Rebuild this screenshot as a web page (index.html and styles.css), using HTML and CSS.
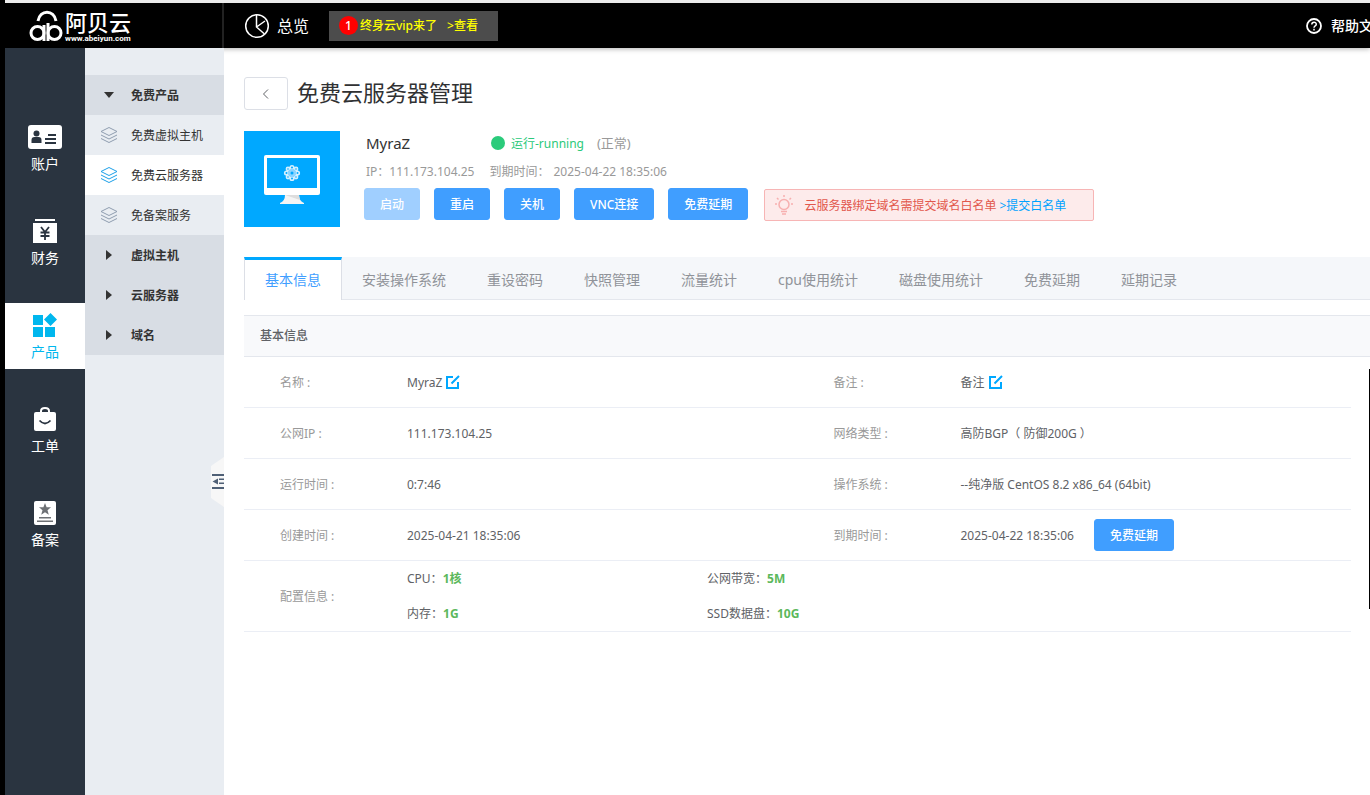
FILE: index.html
```html
<!DOCTYPE html>
<html lang="zh-CN">
<head>
<meta charset="utf-8">
<title>免费云服务器管理</title>
<link rel="stylesheet" href="styles.css">
</head>
<body>
<svg class="defs" aria-hidden="true">
  <symbol id="layers" viewBox="0 0 18 18"><path d="M9 1.500 17 5.500 9 9.500 1 5.500ZM1 9l8 4 8-4M1 12.500l8 4 8-4" fill="none" stroke="currentColor" stroke-width="1"/></symbol>
  <symbol id="edit" viewBox="0 0 14 14"><path d="M7 2H1v11h11V7M5.500 8.500 13 1" fill="none" stroke="currentColor" stroke-width="2"/></symbol>
</svg>
<header class="header">
  <a class="logo" href="#">
    <svg width="34" height="34" viewBox="0 0 34 34" fill="none" stroke="#fff" stroke-width="3">
      <circle cx="8.500" cy="24" r="6.500"/><circle cx="25.500" cy="24" r="6.500"/>
      <path d="M15 16v16M19 14v18M9 12C11 .3 25 .3 27 12"/>
    </svg>
    <span class="logo-text"><span class="logo-name">阿贝云</span><span class="logo-url">www.abeiyun.com</span></span>
  </a>
  <div class="topbar">
    <a class="overview" href="#">
      <svg width="26" height="26" viewBox="0 0 26 26" fill="none" stroke="#fff" stroke-width="1.500"><circle cx="13" cy="13" r="11.300"/><path d="M12.500 1.700V14l8 7M12.500 14l8.500-6"/></svg>
      总览
    </a>
    <a class="vip" href="#"><span class="badge">1</span><span>终身云vip来了</span><span class="vip-look">&gt;查看</span></a>
    <a class="help" href="#">
      <svg width="16" height="16" viewBox="0 0 16 16" fill="none" stroke="#fff" stroke-width="1.800"><circle cx="8" cy="8" r="7"/><path d="M5.800 6.500C5.800 3.500 10.300 3.600 10.300 6.300 10.300 8 8 7.800 8 9.700M8 10.800v1.600" stroke-width="1.500"/></svg>
      帮助文档
    </a>
  </div>
</header>
<div class="layout">
  <nav class="nav">
    <a href="#"><svg width="34" height="24" viewBox="0 0 34 24"><rect width="34" height="24" rx="3" fill="#fff"/><g fill="#2a3440"><circle cx="8.500" cy="8.500" r="3"/><path d="M3.500 18v-3q0-3 3-3h4q3 0 3 3v3zM20 9h8v2h-8zM17 13h11v2H17zM17 17h11v2H17z"/></g></svg>账户</a>
    <a href="#"><svg width="24" height="24" viewBox="0 0 24 24"><path d="M2 0h20v2H2zM0 4h24v20H0z" fill="#fff"/><path d="m8 8 4 5 4-5M12 13v8M7.500 13.500h9M7.500 17h9" fill="none" stroke="#2a3440" stroke-width="1.800"/></svg>财务</a>
    <a class="active" href="#"><svg width="24" height="24" viewBox="0 0 24 24" fill="#00b7ee"><path d="M0 2h10v10H0zM0 14h10v10H0zM12 14h10v10H12zM17.500 0 24 6.500 17.500 13 11 6.500z"/></svg>产品</a>
    <a href="#"><svg width="22" height="24" viewBox="0 0 22 24"><path d="M7 6V4q0-3 4-3t4 3v2" fill="none" stroke="#fff" stroke-width="2"/><rect y="5" width="22" height="19" rx="2" fill="#fff"/><path d="M5.500 13.500q5.500 6 11 0" fill="none" stroke="#2a3440" stroke-width="1.800"/></svg>工单</a>
    <a href="#"><svg width="22" height="24" viewBox="0 0 22 24"><rect width="22" height="24" rx="2" fill="#fff"/><path d="m11 2 1.600 4.300H17l-3.500 2.900 1.300 4.500L11 11.200l-3.800 2.500 1.300-4.500L5 6.300h4.400zM5 16h12v1.500H5zM3 19.500h16V21H3z" fill="#6e7175"/></svg>备案</a>
  </nav>
  <nav class="submenu">
    <a class="group open" href="#"><i class="caret"></i>免费产品</a>
    <a href="#"><svg width="18" height="18"><use href="#layers"/></svg>免费虚拟主机</a>
    <a class="current" href="#"><svg width="18" height="18"><use href="#layers"/></svg>免费云服务器</a>
    <a href="#"><svg width="18" height="18"><use href="#layers"/></svg>免备案服务</a>
    <a class="group" href="#"><i class="caret"></i>虚拟主机</a>
    <a class="group" href="#"><i class="caret"></i>云服务器</a>
    <a class="group" href="#"><i class="caret"></i>域名</a>
    <button class="collapse" aria-label="收起菜单"><svg width="13" height="50" viewBox="0 0 13 50"><path d="M13 0 0 9v32l13 9z" fill="#f7f7f7"/><path d="M1 17h12v2H1zM1 30h12v2H1zM8 21.500h5v1.500H8zM8 25.500h5V27H8zM7 21.500v6l-5.500-3z" fill="#4f6076"/></svg></button>
  </nav>
  <main class="main">
    <div class="title-row">
      <button class="back" aria-label="返回"><svg width="8" height="12" viewBox="0 0 8 12"><path d="M6 1.500 1.500 6 6 10.500" fill="none" stroke="#606266"/></svg></button>
      <h1>免费云服务器管理</h1>
    </div>
    <section class="server">
      <svg class="server-pic" width="96" height="96" viewBox="0 0 96 96">
        <path d="M0 0h96v96H0z" fill="#00a8ff"/><rect x="20" y="24" width="56" height="40" rx="2" fill="#fff"/><path d="M23 27h50v30H23z" fill="#00a8ff"/>
        <path d="M41 64h14q0 6 5 8v1H36v-1q5-2 5-8z" fill="#f4f4f4"/><path d="M41 64h14l1 5z" fill="#ddd"/>
        <g fill="none" stroke="#d5f0ff" stroke-width="1.600"><circle cx="48" cy="36.500" r="1.800"/><circle cx="48" cy="47.500" r="1.800"/><circle cx="42.500" cy="42" r="1.800"/><circle cx="53.500" cy="42" r="1.800"/><circle cx="44" cy="38" r="1.600"/><circle cx="52" cy="38" r="1.600"/><circle cx="44" cy="46" r="1.600"/><circle cx="52" cy="46" r="1.600"/></g><circle cx="48" cy="42" r="4" fill="#8ad4ff"/><circle cx="48" cy="42" r="1.500" fill="#00a8ff"/>
      </svg>
      <div class="server-info">
        <div class="line name-line"><strong class="name">MyraZ</strong><span class="status"><i class="dot"></i>运行-running</span><span class="normal">(正常)</span></div>
        <div class="line meta"><span class="ip">IP：111.173.104.25</span><span>到期时间：</span><span>2025-04-22 18:35:06</span></div>
        <div class="actions">
          <button class="btn" disabled>启动</button><button class="btn">重启</button><button class="btn">关机</button><button class="btn">VNC连接</button><button class="btn">免费延期</button>
          <div class="alert"><svg width="20" height="20" viewBox="0 0 20 20" fill="none" stroke="#f7b0b0" stroke-width="1.500"><circle cx="10" cy="9.500" r="5"/><path d="M7 16.500h6M8 19h4M10 0v2M3 3l1.500 1.500M17 3l-1.500 1.500M1 9h2M17 9h2"/></svg><span>云服务器绑定域名需提交域名白名单 <a href="#">&gt;提交白名单</a></span></div>
        </div>
      </div>
    </section>
    <div class="tabs" role="tablist">
      <button class="tab selected" role="tab" aria-selected="true">基本信息</button><button class="tab" role="tab">安装操作系统</button><button class="tab" role="tab">重设密码</button><button class="tab" role="tab">快照管理</button><button class="tab" role="tab">流量统计</button><button class="tab" role="tab">cpu使用统计</button><button class="tab" role="tab">磁盘使用统计</button><button class="tab" role="tab">免费延期</button><button class="tab" role="tab">延期记录</button>
    </div>
    <h2 class="panel-title">基本信息</h2>
    <div class="table-wrap">
    <table class="info">
      <colgroup><col class="c-label"><col><col class="c-label"><col></colgroup>
      <tr><th scope="row">名称 :</th><td><span class="editable">MyraZ<button class="edit" aria-label="修改名称"><svg width="14" height="14"><use href="#edit"/></svg></button></span></td><th scope="row">备注 :</th><td><span class="editable">备注<button class="edit" aria-label="修改备注"><svg width="14" height="14"><use href="#edit"/></svg></button></span></td></tr>
      <tr><th scope="row">公网IP :</th><td>111.173.104.25</td><th scope="row">网络类型 :</th><td>高防BGP（ 防御200G ）</td></tr>
      <tr><th scope="row">运行时间 :</th><td>0:7:46</td><th scope="row">操作系统 :</th><td>--纯净版 CentOS 8.2 x86_64 (64bit)</td></tr>
      <tr><th scope="row">创建时间 :</th><td>2025-04-21 18:35:06</td><th scope="row">到期时间 :</th><td><span class="renew">2025-04-22 18:35:06<button class="btn">免费延期</button></span></td></tr>
      <tr class="config"><th scope="row">配置信息 :</th><td colspan="3"><div class="specs"><span>CPU：<b>1核</b></span><span>公网带宽：<b>5M</b></span><span>内存：<b>1G</b></span><span>SSD数据盘：<b>10G</b></span></div></td></tr>
    </table>
    </div>
  </main>
</div>
<div class="scroll-mark"></div>
</body>
</html>
```
FILE: styles.css
```css
* { box-sizing: border-box; }
body {
  margin: 0;
  min-height: 100vh;
  display: flex;
  flex-direction: column;
  overflow: hidden;
  border-left: 5px solid #000;
  background: #fff;
  color: #606266;
  font: 12px/19px "Noto Sans", "Noto Sans CJK SC", sans-serif;
}
a { color: inherit; text-decoration: none; }
button { font: inherit; color: inherit; cursor: pointer; }
svg { display: block; flex: none; }
.defs { position: absolute; width: 0; height: 0; }

.header {
  display: flex;
  height: 48px;
  border-top: 3px solid #ececec;
  background: #000;
  color: #fff;
  box-shadow: 0 1px 5px rgba(0, 0, 0, .3);
}
.logo {
  width: 219px;
  display: flex;
  align-items: center;
  gap: 2px;
  padding-left: 24px;
  border-right: 2px solid #222;
}
.logo-text { display: flex; flex-direction: column; }
.logo-name { font: 500 22px/26px "Noto Sans CJK SC", sans-serif; }
.logo-url { font: bold 8px/10px Roboto, sans-serif; }
.topbar {
  flex: 1;
  min-width: 0;
  display: flex;
  align-items: center;
  padding-left: 20px;
  overflow: hidden;
}
.overview { display: flex; align-items: center; gap: 7px; font-size: 16px; line-height: 24px; white-space: nowrap; }
.vip {
  display: flex;
  align-items: center;
  height: 30px;
  margin-left: 20px;
  padding: 0 20px 0 10px;
  background: #4c4c4c;
  color: #ff0;
  font-weight: 500;
  white-space: nowrap;
}
.vip-look { margin-left: 10px; }
.badge {
  width: 19px;
  margin-right: 2px;
  border-radius: 50%;
  background: #f00;
  color: #fff;
  text-align: center;
}
.help {
  display: flex;
  align-items: center;
  gap: 9px;
  margin: 0 -17px 0 auto;
  font-size: 14px;
  font-weight: 500;
  white-space: nowrap;
}

.layout { flex: 1; display: flex; }
.nav {
  width: 80px;
  flex: none;
  display: flex;
  flex-direction: column;
  gap: 28px;
  padding-top: 67px;
  background: #2a3440;
  color: #fff;
  font-size: 14px;
}
.nav a {
  height: 66px;
  display: flex;
  flex-direction: column;
  align-items: center;
  gap: 5px;
  padding-top: 10px;
}
.nav .active { background: #fff; color: #00b7ee; }
.submenu {
  position: relative;
  width: 139px;
  flex: none;
  padding-top: 27px;
  background: #e9edf2;
  color: #333;
}
.submenu a {
  height: 40px;
  display: flex;
  align-items: center;
  gap: 13px;
  padding-left: 15px;
}
.submenu a svg { color: #8f9db0; }
.submenu .current { background: #fff; }
.submenu .current svg { color: #1c9fe8; }
.submenu .group { background: #d8dde4; font-weight: bold; }
.caret { width: 18px; display: flex; justify-content: center; }
.caret::before {
  content: "";
  border: 5px solid transparent;
  border-left: 6px solid #333;
  border-right: 0;
}
.open .caret::before {
  border: 5px solid transparent;
  border-top: 6px solid #333;
  border-bottom: 0;
}
.collapse {
  position: absolute;
  right: 0;
  top: 409px;
  padding: 0;
  border: 0;
  background: none;
}

.main { flex: 1; min-width: 0; padding: 29px 0 0 20px; }
.title-row { display: flex; gap: 9px; }
.back {
  width: 44px;
  height: 33px;
  display: flex;
  align-items: center;
  justify-content: center;
  border: 1px solid #dcdfe6;
  border-radius: 3px;
  background: #fff;
}
h1 { margin: 0; color: #303133; font-size: 22px; line-height: 30px; font-weight: 400; }
.server { display: flex; gap: 24px; margin-top: 21px; }
.line { display: flex; align-items: center; }
.name-line { height: 24px; padding-left: 2px; }
.name { width: 125px; color: #333; font-size: 15px; font-weight: 400; }
.status { display: flex; align-items: center; gap: 6px; color: #2bc97a; font-size: 12px; }
.dot { width: 14px; height: 14px; border-radius: 50%; background: #2bcb7b; }
.normal { margin-left: 13px; color: #999; font-size: 13px; }
.meta { height: 32px; margin-bottom: 1px; padding-left: 2px; color: #999; }
.meta span { margin-right: 4px; }
.meta .ip { margin-right: 15px; }
.actions { display: flex; gap: 14px; }
.btn {
  height: 32px;
  padding: 0 15px;
  border: 1px solid #409eff;
  border-radius: 3px;
  background: #409eff;
  color: #fff;
  font-weight: 500;
  white-space: nowrap;
}
.btn:disabled { border-color: #a0cfff; background: #a0cfff; }
.alert {
  display: flex;
  align-items: center;
  gap: 10px;
  width: 330px;
  height: 32px;
  margin: 1px 0 0 2px;
  padding-left: 9px;
  border: 1px solid #f7b5b5;
  border-radius: 2px;
  background: #fdebeb;
  color: #e2574c;
  white-space: nowrap;
}
.alert a { color: #00a2ff; }

.tabs {
  display: flex;
  height: 43px;
  margin-top: 30px;
  background: #f5f7fa;
  box-shadow: inset 0 -1px #e4e7ed;
}
.tab {
  padding: 0 20px;
  border: 0;
  border-right: 1px solid transparent;
  border-top: 3px solid transparent;
  background: none;
  color: #909399;
  font-size: 14px;
  line-height: 18px;
  white-space: nowrap;
}
.selected {
  border-left: 1px solid #dcdfe6;
  border-right-color: #dcdfe6;
  border-top-color: #00a8ff;
  background: #fff;
  color: #409eff;
}
.panel-title {
  margin: 15px 0 0;
  padding: 10px 16px 11px;
  border: solid #e4e7ed;
  border-width: 1px 0;
  background: #f8f9fb;
  color: #606266;
  font-size: 12px;
  line-height: 19px;
  font-weight: 500;
}
.table-wrap { padding-right: 19px; }
.info { width: 100%; table-layout: fixed; border-spacing: 0; }
.c-label { width: 163px; }
.info th, .info td {
  height: 51px;
  padding: 0;
  border-bottom: 1px solid #ebeef5;
  text-align: left;
  font-weight: 400;
}
.info th { padding-left: 36px; color: #999; }
.editable { display: flex; align-items: center; gap: 4px; }
.edit { padding: 0; border: 0; background: none; color: #00a8ff; }
.renew { display: flex; align-items: center; gap: 20px; }
.info .config th, .info .config td { height: 71px; }
.specs { display: grid; grid-template-columns: 300px 1fr; gap: 16px 0; }
.specs b { color: #5cb85c; }
.scroll-mark { position: fixed; right: 0; top: 369px; width: 1px; height: 240px; background: #000; }
```
